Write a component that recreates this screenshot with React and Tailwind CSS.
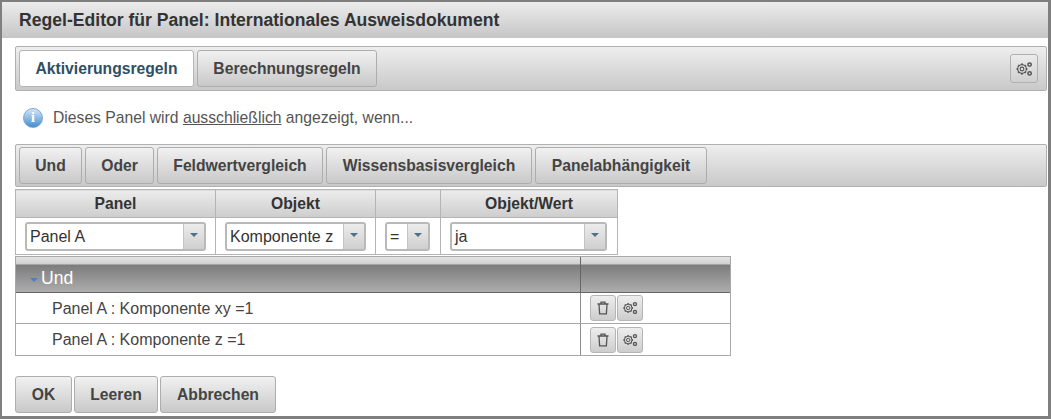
import React from 'react'

function GearsIcon({ size = 18 }) {
    const teeth = [0, 45, 90, 135, 180, 225, 270, 315]
    return (
        <svg width={size} height={size} viewBox="0 0 18 18" fill="none" stroke="#555" strokeWidth="1.1">
            <circle cx="7" cy="9" r="1.9" />
            <circle cx="7" cy="9" r="4.3" />
            {teeth.map((a) => (
                <line key={a} x1="7" y1="3.6" x2="7" y2="5" strokeWidth="2" transform={`rotate(${a} 7 9)`} />
            ))}
            <circle cx="14.6" cy="4.6" r="1.7" strokeWidth="1.5" />
            <circle cx="14.6" cy="13.4" r="1.7" strokeWidth="1.5" />
        </svg>
    )
}

function TrashIcon() {
    return (
        <svg width="14" height="14" viewBox="0 0 14 14" fill="none" stroke="#555" strokeWidth="1.3">
            <path d="M1.5 3h11M5 3V1.2h4V3M3 3l.6 9.8h6.8L11 3" />
        </svg>
    )
}

function Btn({ children, w }) {
    return (
        <button className={"h-[37px] rounded-[3px] border border-[#adadad] bg-gradient-to-b from-[#f1f1f1] to-[#c9c9c9] text-[15.7px] font-bold text-[#444] " + w}>
            {children}
        </button>
    )
}

function IconBtn({ children }) {
    return (
        <button className="flex h-[26px] w-[26px] items-center justify-center rounded-[3px] border border-[#b5b5b5] bg-gradient-to-b from-[#eeeeee] to-[#cdcdcd]">
            {children}
        </button>
    )
}

function Combo({ text, w, arrow = 'w-[21px]' }) {
    return (
        <div className={"flex h-[29px] items-stretch rounded-[3px] border-2 border-[#b9b9b9] bg-white " + w}>
            <span className="flex-1 pl-[3px] text-[16px] leading-[25px] whitespace-nowrap text-[#333]">{text}</span>
            <span className={"flex items-center justify-center border-l border-[#c4c4c4] bg-gradient-to-b from-[#ececec] to-[#cfcfcf] " + arrow}>
                <span className="mb-[3px] h-0 w-0 border-x-[4px] border-t-[4px] border-x-transparent border-t-[#4f7285]"></span>
            </span>
        </div>
    )
}

const th = "h-[28px] border border-[#b4b4b4] bg-gradient-to-b from-[#ececec] to-[#cdcdcd] p-0 text-center text-[15.7px] font-bold text-[#333]"
const td = "h-[37px] border border-[#b4b4b4] p-0 pl-[9px]"

function TreeRow({ text, h }) {
    return (
        <div className={"flex border-b border-[#a8a8a8] " + h}>
            <div className="flex w-[565px] items-center border-r border-[#8c8c8c] pt-[1px] pl-[36px] text-[16px] text-[#444]">{text}</div>
            <div className="flex items-center gap-[1px] pl-[9px]">
                <IconBtn><TrashIcon /></IconBtn>
                <IconBtn><GearsIcon size={16} /></IconBtn>
            </div>
        </div>
    )
}

export default function App() {
    return (
        <div className="h-[419px] w-[1051px] overflow-hidden border-t-2 border-r-[3px] border-b-[3px] border-l-2 border-[#7f7f7f] bg-white font-['Liberation_Sans',Arial,sans-serif]">
            <div className="flex h-[36px] items-center bg-gradient-to-b from-[#ececec] to-[#c6c6c6] pl-[17px] text-[17.6px] font-bold text-[#333]">
                Regel-Editor für Panel: Internationales Ausweisdokument
            </div>

            <div className="pr-[1px] pl-[13px]">
                <div className="mt-[8px] flex h-[45px] items-center gap-[3px] rounded-[2px] border border-[#b0b0b0] bg-gradient-to-b from-[#eeeeee] to-[#c9c9c9] pr-[8px] pl-[3px]">
                    <button className="h-[37px] w-[175px] rounded-[3px] border border-[#b5b5b5] bg-white text-[15.7px] font-bold text-[#2f5064]">Aktivierungsregeln</button>
                    <Btn w="w-[180px]">Berechnungsregeln</Btn>
                    <div className="ml-auto flex h-[29px] w-[28px] items-center justify-center rounded-[3px] border border-[#b0b0b0] bg-gradient-to-b from-[#ececec] to-[#d0d0d0]">
                        <GearsIcon />
                    </div>
                </div>

                <div className="flex h-[53px] items-center gap-[10px] pl-[8px] text-[15.7px] text-[#555]">
                    <span className="flex h-[20px] w-[20px] items-center justify-center rounded-full border border-[#7ba6cf] bg-gradient-to-b from-[#d4e6f6] to-[#3f8ed0] font-['Liberation_Serif',serif] text-[14px] font-bold text-white">i</span>
                    <span>Dieses Panel wird <span className="underline">ausschließlich</span> angezeigt, wenn...</span>
                </div>

                <div className="flex h-[43px] items-center gap-[3px] rounded-[2px] border border-[#b0b0b0] bg-gradient-to-b from-[#eeeeee] to-[#c9c9c9] pl-[3px]">
                    <Btn w="w-[63px]">Und</Btn>
                    <Btn w="w-[69px]">Oder</Btn>
                    <Btn w="w-[166px]">Feldwertvergleich</Btn>
                    <Btn w="w-[206px]">Wissensbasisvergleich</Btn>
                    <Btn w="w-[172px]">Panelabhängigkeit</Btn>
                </div>

                <table className="mt-[2px] w-[602px] table-fixed border-collapse">
                    <thead>
                        <tr>
                            <th className={th + " w-[200px]"}>Panel</th>
                            <th className={th + " w-[160px]"}>Objekt</th>
                            <th className={th + " w-[65px]"}></th>
                            <th className={th + " w-[177px]"}>Objekt/Wert</th>
                        </tr>
                    </thead>
                    <tbody>
                        <tr>
                            <td className={td}><Combo text="Panel A" w="w-[181px]" /></td>
                            <td className={td}><Combo text="Komponente z" w="w-[141px]" /></td>
                            <td className={td}><Combo text="=" w="w-[45px]" /></td>
                            <td className={td}><Combo text="ja" w="w-[157px]" /></td>
                        </tr>
                    </tbody>
                </table>

                <div className="mt-[1px] w-[716px] border-x border-[#a8a8a8]">
                    <div className="flex h-[37px] border-y border-[#a8a8a8] border-b-[#666] bg-[linear-gradient(to_bottom,#e4e4e4_0,#d0d0d0_7px,#7c7c7c_8px,#adadad_100%)]">
                        <div className="flex w-[565px] items-center border-r border-[#666] pt-[7px] pl-[14px] text-[17.6px] text-white">
                            <span className="mt-[3px] mr-[3px] h-0 w-0 border-x-[4px] border-t-[4px] border-x-transparent border-t-[#4a7fd0]"></span>
                            Und
                        </div>
                    </div>
                    <TreeRow text="Panel A : Komponente xy =1" h="h-[31px]" />
                    <TreeRow text="Panel A : Komponente z =1" h="h-[32px]" />
                </div>

                <div className="mt-[20px] flex gap-[2px]">
                    <Btn w="w-[57px]">OK</Btn>
                    <Btn w="w-[84px]">Leeren</Btn>
                    <Btn w="w-[116px]">Abbrechen</Btn>
                </div>
            </div>
        </div>
    )
}
